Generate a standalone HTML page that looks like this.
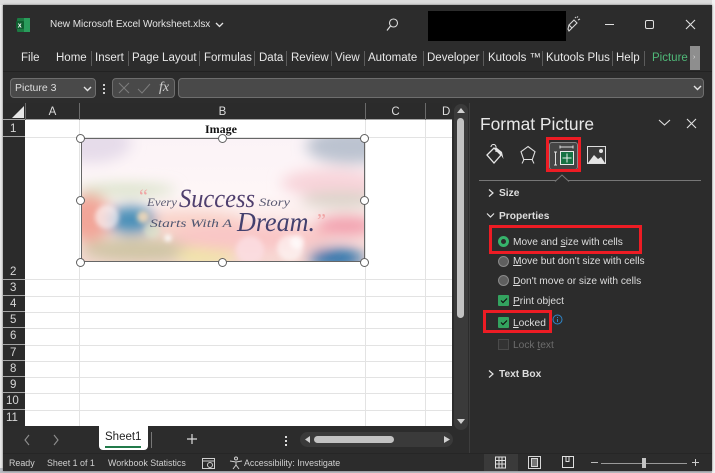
<!DOCTYPE html>
<html><head><meta charset="utf-8"><style>
html,body{margin:0;padding:0;width:715px;height:473px;overflow:hidden;background:#e9e9e9}
*{box-sizing:border-box}
body{font-family:"Liberation Sans",sans-serif;position:relative;color:#e6e6e6}
.a{position:absolute}
.t{position:absolute;white-space:nowrap;line-height:1}
.m{font-size:11.5px;top:53px;color:#e8e8e8}
.s{position:absolute;width:1px;height:15px;top:51px;background:#5c5c5c}
.rh{position:absolute;left:3px;width:22px;background:#2b2b2b;border-bottom:1px solid #a5a5a5;color:#d8d8d8;font-size:11.5px;text-align:center}
.ch{position:absolute;top:103px;height:17px;color:#dcdcdc;font-size:11.5px;text-align:center;line-height:19px;border-left:1px solid #6a6a6a}
.gh{position:absolute;left:25px;width:427px;height:1px;background:#e3e3e3}
.gv{position:absolute;top:120px;height:306px;width:1px;background:#e3e3e3}
.h{position:absolute;width:9px;height:9px;border-radius:50%;background:#fff;border:1.6px solid #5f5f5f}
.p{position:absolute;font-size:10.2px;color:#dedede;white-space:nowrap;line-height:1}
.b{font-weight:bold}
.red{position:absolute;border:3px solid #ed1c24}
.rd{position:absolute;left:498px;width:11px;height:11px;border-radius:50%;background:#5f5f5f;border:1px solid #8a8a8a}
.ck{position:absolute;left:498px;width:11px;height:11px;background:#33a35f;border-radius:1px}
.st{position:absolute;top:459px;font-size:8.9px;color:#cfcfcf;white-space:nowrap;line-height:1}
u{text-underline-offset:1px}
</style></head><body>
<div class="a" style="left:0;top:0;width:715px;height:5px;background:#dcdcdc"></div>
<div class="a" style="left:0;top:468px;width:715px;height:5px;background:#b9bcc2"></div>
<div class="a" style="left:712px;top:0;width:3px;height:473px;background:#f2f2f2"></div>
<div class="a" style="left:3px;top:5px;width:709px;height:466px;background:#2c2c2c;box-shadow:0 0 2px #666"></div>

<!-- title bar -->
<svg class="a" style="left:15px;top:17px" width="16" height="16" viewBox="0 0 16 16"><rect x="2" y="1" width="13" height="14" rx="1" fill="#1c7a42"/><rect x="9" y="1" width="6" height="14" fill="#2a9d5c"/><rect x="1" y="4" width="8" height="8" rx="1" fill="#0f5f30"/><text x="2.8" y="10.6" font-size="7" font-weight="bold" fill="#fff" font-family="Liberation Sans">x</text></svg>
<div class="t" style="left:50px;top:20px;font-size:10px;letter-spacing:-.02px;color:#e4e4e4">New Microsoft Excel Worksheet.xlsx</div>
<svg class="a" style="left:215px;top:22px" width="9" height="6"><path d="M1 1l3.500 3.500L8 1" stroke="#e4e4e4" stroke-width="1.300" fill="none"/></svg>
<svg class="a" style="left:385px;top:17px" width="15" height="15"><circle cx="8.500" cy="6" r="4" stroke="#dcdcdc" stroke-width="1.100" fill="none"/><path d="M5.500 9l-3.500 4.500" stroke="#dcdcdc" stroke-width="1.200"/></svg>
<div class="a" style="left:428px;top:11px;width:138px;height:30px;background:#000"></div>
<svg class="a" style="left:565px;top:16px" width="16" height="18"><path d="M4 9l5-5 3 3-5 5zM4 9l-1 4 1 2 3-3M10 2l1-1M13 4l2-1M12 1.500l1-1" stroke="#d8d8d8" stroke-width="1.100" fill="none"/></svg>
<div class="a" style="left:605px;top:24px;width:9px;height:1px;background:#e0e0e0"></div>
<div class="a" style="left:645px;top:20px;width:9px;height:9px;border:1.200px solid #e0e0e0;border-radius:2px"></div>
<svg class="a" style="left:685px;top:19px" width="11" height="11"><path d="M1 1l9 9M10 1l-9 9" stroke="#e0e0e0" stroke-width="1.100"/></svg>

<!-- ribbon tabs -->
<div class="a" style="left:3px;top:71px;width:709px;height:1px;background:#222"></div>
<div class="t m" style="left:21px">File</div>
<div class="t m" style="left:56px">Home</div><div class="s" style="left:91px"></div>
<div class="t m" style="left:95px">Insert</div><div class="s" style="left:128px"></div>
<div class="t m" style="left:132px">Page Layout</div><div class="s" style="left:199px"></div>
<div class="t m" style="left:204px">Formulas</div><div class="s" style="left:254px"></div>
<div class="t m" style="left:259px">Data</div><div class="s" style="left:286px"></div>
<div class="t m" style="left:291px">Review</div><div class="s" style="left:331px"></div>
<div class="t m" style="left:335px">View</div><div class="s" style="left:364px"></div>
<div class="t m" style="left:368px">Automate</div><div class="s" style="left:423px"></div>
<div class="t m" style="left:427px">Developer</div><div class="s" style="left:483px"></div>
<div class="t m" style="left:488px">Kutools ™</div><div class="s" style="left:542px"></div>
<div class="t m" style="left:546px">Kutools Plus</div><div class="s" style="left:612px"></div>
<div class="t m" style="left:616px">Help</div><div class="s" style="left:644px"></div>
<div class="t m" style="left:652px;color:#4fb878">Picture</div>
<div class="a" style="left:690px;top:46px;width:10px;height:24px;background:#8e8e8e"></div>
<div class="t" style="left:693px;top:54px;font-size:7px;color:#ddd">›</div>

<!-- formula bar -->
<div class="a" style="left:10px;top:78px;width:86px;height:20px;background:#494949;border:1px solid #6e6e6e;border-radius:4px"></div>
<div class="t" style="left:15px;top:83px;font-size:10.500px;color:#dedede">Picture 3</div>
<svg class="a" style="left:83px;top:86px" width="9" height="6"><path d="M1 1l3.500 3.500L8 1" stroke="#e4e4e4" stroke-width="1.400" fill="none"/></svg>
<div class="a" style="left:103px;top:84px;width:2px;height:2px;background:#ccc;box-shadow:0 4px #ccc,0 8px #ccc"></div>
<div class="a" style="left:112px;top:78px;width:63px;height:20px;background:#494949;border:1px solid #6e6e6e;border-radius:4px"></div>
<svg class="a" style="left:117px;top:82px" width="40" height="13"><path d="M2 1l10 10M12 1L2 11" stroke="#7c7c7c" stroke-width="1"/><path d="M21 7l4 4 8-9" stroke="#7c7c7c" stroke-width="1" fill="none"/></svg>
<div class="t" style="left:159px;top:81px;font-family:'Liberation Serif',serif;font-style:italic;font-size:14px;color:#cfcfcf">fx</div>
<div class="a" style="left:178px;top:78px;width:526px;height:20px;background:#494949;border:1px solid #6e6e6e;border-radius:4px"></div>
<svg class="a" style="left:693px;top:85px" width="9" height="6"><path d="M1 1l3.500 3.500L8 1" stroke="#e4e4e4" stroke-width="1.400" fill="none"/></svg>

<!-- col headers -->
<div class="a" style="left:3px;top:103px;width:449px;height:17px;background:#2b2b2b;border-bottom:1px solid #a5a5a5"></div>
<svg class="a" style="left:11px;top:105px" width="14" height="14"><path d="M13 1v12H1z" fill="#e6e6e6"/></svg>
<div class="ch" style="left:25px;width:54px">A</div>
<div class="ch" style="left:79px;width:286px">B</div>
<div class="ch" style="left:365px;width:60px">C</div>
<div class="ch" style="left:425px;width:27px;padding-left:16px;text-align:left">D</div>

<!-- row headers -->
<div class="rh" style="top:120px;height:17px;line-height:18px;padding-left:7px;text-align:left">1</div>
<div class="rh" style="top:137px;height:143px;line-height:270px;padding-left:7px;text-align:left;overflow:hidden">2</div>
<div class="rh" style="top:280px;height:16px;line-height:17px;padding-left:7px;text-align:left">3</div>
<div class="rh" style="top:296px;height:16px;line-height:17px;padding-left:7px;text-align:left">4</div>
<div class="rh" style="top:312px;height:16px;line-height:17px;padding-left:7px;text-align:left">5</div>
<div class="rh" style="top:328px;height:17px;line-height:17px;padding-left:7px;text-align:left">6</div>
<div class="rh" style="top:345px;height:16px;line-height:17px;padding-left:7px;text-align:left">7</div>
<div class="rh" style="top:361px;height:16px;line-height:17px;padding-left:7px;text-align:left">8</div>
<div class="rh" style="top:377px;height:16px;line-height:17px;padding-left:7px;text-align:left">9</div>
<div class="rh" style="top:393px;height:17px;line-height:17px;padding-left:3px;text-align:left">10</div>
<div class="rh" style="top:410px;height:16px;line-height:17px;padding-left:3px;text-align:left;border:0">11</div>

<!-- sheet -->
<div class="a" style="left:25px;top:120px;width:427px;height:306px;background:#fff"></div>
<div class="gh" style="top:137px"></div><div class="gh" style="top:279px"></div><div class="gh" style="top:296px"></div><div class="gh" style="top:312px"></div><div class="gh" style="top:328px"></div><div class="gh" style="top:345px"></div><div class="gh" style="top:361px"></div><div class="gh" style="top:377px"></div><div class="gh" style="top:393px"></div><div class="gh" style="top:410px"></div>
<div class="gv" style="left:79px"></div><div class="gv" style="left:365px"></div><div class="gv" style="left:425px"></div>
<div class="t" style="left:205px;top:123px;font-family:'Liberation Serif',serif;font-weight:bold;font-size:12px;color:#111">Image</div>

<!-- picture -->
<svg class="a" style="left:81px;top:138px" width="284" height="124" viewBox="0 0 284 124">
<defs>
<filter id="bl" x="-30%" y="-30%" width="160%" height="160%"><feGaussianBlur stdDeviation="7"/></filter>
<filter id="b2" x="-30%" y="-30%" width="160%" height="160%"><feGaussianBlur stdDeviation="2.500"/></filter>
<clipPath id="c"><rect width="284" height="124"/></clipPath>
<linearGradient id="g" x1="0" y1="0" x2="0" y2="1"><stop offset="0" stop-color="#fbf3f7"/><stop offset=".45" stop-color="#fef6f7"/><stop offset="1" stop-color="#f6d8d2"/></linearGradient>
</defs>
<g clip-path="url(#c)">
<rect width="284" height="124" fill="url(#g)"/>
<g filter="url(#bl)">
<ellipse cx="270" cy="8" rx="45" ry="18" fill="#bcc3d0"/>
<ellipse cx="250" cy="45" rx="50" ry="14" fill="#f8d4da"/>
<ellipse cx="10" cy="5" rx="40" ry="20" fill="#e6dcea"/>
<ellipse cx="45" cy="52" rx="50" ry="6" fill="#d5e0c4"/>
<ellipse cx="260" cy="62" rx="40" ry="8" fill="#d9d3c8"/>
<ellipse cx="110" cy="85" rx="55" ry="12" fill="#f9d2c8"/>
<ellipse cx="60" cy="112" rx="60" ry="12" fill="#cfc5a4"/>
<ellipse cx="125" cy="118" rx="30" ry="9" fill="#f0e6a4"/>
<ellipse cx="170" cy="100" rx="80" ry="14" fill="#f9c6c6"/>
<ellipse cx="8" cy="80" rx="22" ry="24" fill="#f2a598"/>
<ellipse cx="50" cy="82" rx="24" ry="14" fill="#4a8fb8"/>
<ellipse cx="265" cy="88" rx="30" ry="10" fill="#f2a0ae"/>
<ellipse cx="255" cy="120" rx="28" ry="9" fill="#1f6aa8"/>
</g>
<g filter="url(#b2)" fill="#fff">
<circle cx="26" cy="79" r="12" opacity=".6"/>
<circle cx="62" cy="79" r="6" fill="#f8dcb8" opacity=".85"/>
<circle cx="71" cy="92" r="8" fill="#dce8cc" opacity=".6"/>
<circle cx="87" cy="100" r="3.500" opacity=".95"/>
<circle cx="209" cy="110" r="13" opacity=".55"/>
<circle cx="216" cy="104" r="7" opacity=".7"/>
<circle cx="169" cy="112" r="14" fill="#fbdde2" opacity=".85"/>
</g>
<text x="58" y="65" font-family="Liberation Serif" font-size="20" fill="#f0a5a5">“</text>
<text x="66" y="68" font-family="Liberation Serif" font-style="italic" font-size="12" fill="#5a5a72" textLength="30" lengthAdjust="spacingAndGlyphs">Every</text>
<text x="98" y="69" font-family="Liberation Serif" font-style="italic" font-size="26" fill="#4f3f6e" textLength="76" lengthAdjust="spacingAndGlyphs">Success</text>
<text x="178" y="68" font-family="Liberation Serif" font-style="italic" font-size="12" fill="#5a5a72" textLength="31" lengthAdjust="spacingAndGlyphs">Story</text>
<text x="69" y="89" font-family="Liberation Serif" font-style="italic" font-size="12" fill="#4e5570" textLength="82" lengthAdjust="spacingAndGlyphs">Starts With A</text>
<text x="156" y="93" font-family="Liberation Serif" font-style="italic" font-size="27" fill="#43406e" textLength="78" lengthAdjust="spacingAndGlyphs">Dream.</text>
<text x="236" y="89" font-family="Liberation Serif" font-size="20" fill="#f0a5a5">”</text>
</g></svg>
<div class="a" style="left:81px;top:138px;width:284px;height:124px;border:1px solid #666"></div>
<div class="h" style="left:76px;top:134px"></div><div class="h" style="left:218px;top:134px"></div><div class="h" style="left:360px;top:134px"></div>
<div class="h" style="left:76px;top:196px"></div><div class="h" style="left:360px;top:196px"></div>
<div class="h" style="left:76px;top:258px"></div><div class="h" style="left:218px;top:258px"></div><div class="h" style="left:360px;top:258px"></div>

<!-- v scrollbar -->
<div class="a" style="left:454px;top:104px;width:14px;height:326px;background:#3a3a3a;border-radius:7px"></div>
<svg class="a" style="left:456px;top:107px" width="10" height="8"><path d="M5 1l4 5H1z" fill="#d0d0d0"/></svg>
<div class="a" style="left:457px;top:118px;width:7px;height:200px;background:#c2c2c2;border-radius:4px"></div>
<svg class="a" style="left:456px;top:418px" width="10" height="8"><path d="M1 1h8L5 6z" fill="#d0d0d0"/></svg>
<div class="a" style="left:469px;top:103px;width:1px;height:350px;background:#3d3d3d"></div>

<!-- tabs bar -->
<svg class="a" style="left:22px;top:434px" width="40" height="12"><path d="M7 1L3 6l4 5M32 1l4 5-4 5" stroke="#8f8f8f" stroke-width="1.100" fill="none"/></svg>
<div class="a" style="left:99px;top:426px;width:49px;height:24px;background:#fff;border-radius:0 0 4px 4px"></div>
<div class="t" style="left:105px;top:432px;font-size:11.500px;color:#222">Sheet1</div>
<div class="a" style="left:105px;top:446px;width:36px;height:2px;background:#217a4a"></div>
<div class="a" style="left:151px;top:432px;width:1px;height:16px;background:#777"></div>
<svg class="a" style="left:186px;top:433px" width="12" height="12"><path d="M6 1v10M1 6h10" stroke="#dcdcdc" stroke-width="1.200"/></svg>
<div class="a" style="left:285px;top:436px;width:2px;height:2px;background:#ddd;box-shadow:0 4px #ddd,0 8px #ddd"></div>
<div class="a" style="left:300px;top:432px;width:153px;height:15px;background:#3a3a3a;border-radius:8px"></div>
<svg class="a" style="left:304px;top:435px" width="8" height="9"><path d="M6 1v7L1 4.500z" fill="#d0d0d0"/></svg>
<div class="a" style="left:314px;top:436px;width:80px;height:7px;background:#c2c2c2;border-radius:4px"></div>
<svg class="a" style="left:443px;top:435px" width="8" height="9"><path d="M1 1v7l6-3.500z" fill="#d0d0d0"/></svg>

<!-- panel -->
<div class="t" style="left:480px;top:116px;font-size:17.400px;color:#e8e8e8">Format Picture</div>
<svg class="a" style="left:658px;top:118px" width="40" height="11"><path d="M1 2l5.500 5L12 2" stroke="#e0e0e0" stroke-width="1.100" fill="none"/><path d="M29 1l9 9M38 1l-9 9" stroke="#e0e0e0" stroke-width="1.100"/></svg>
<svg class="a" style="left:485px;top:144px" width="20" height="21"><path d="M2 11l7-7 7 7-7 8z" stroke="#e6e6e6" stroke-width="1.300" fill="none"/><path d="M6 3a2.500 2.500 0 0 1 5 0v5" stroke="#e6e6e6" stroke-width="1.100" fill="none"/><path d="M9 4h3l5 4 1.500 7-2.500-4z" fill="#e6e6e6"/></svg>
<svg class="a" style="left:519px;top:145px" width="18" height="20"><path d="M9 1.500l7 5.200-2.700 7.800H4.700L2 6.700z" stroke="#e0e0e0" stroke-width="1.100" fill="none"/><path d="M5 14.500l-2 4M13 14.500l2 4" stroke="#e0e0e0" stroke-width="1"/></svg>
<div class="a" style="left:549px;top:142px;width:29px;height:28px;background:#454545;border:1px solid #888;border-radius:3px"></div>
<svg class="a" style="left:552px;top:145px" width="24" height="22"><path d="M8 2h13M8 .5v3M21 .5v3M2 7h3M2 20h3M3.500 7v13" stroke="#e0e0e0" stroke-width="1" fill="none"/><rect x="8.500" y="6.500" width="13" height="13" fill="#177243" stroke="#e8e8e8" stroke-width="1"/><path d="M15 8.500v9M10.500 13h9" stroke="#e6f0ea" stroke-width="1"/></svg>
<div class="red" style="left:546px;top:137px;width:35px;height:35px;background:transparent"></div>
<svg class="a" style="left:587px;top:146px" width="19" height="18"><rect x=".5" y=".5" width="18" height="17" fill="#3a3a3a" stroke="#ddd"/><path d="M1 17l6-8 4 4 3-2 4 6z" fill="#e4e4e4"/><circle cx="14" cy="5" r="2" fill="#e4e4e4"/></svg>
<div class="a" style="left:479px;top:180px;width:222px;height:1px;background:#777"></div>
<svg class="a" style="left:554px;top:174px" width="16" height="8"><path d="M1 7.500L8 1l7 6.500" stroke="#777" fill="#2c2c2c"/></svg>

<svg class="a" style="left:487px;top:189px" width="8" height="8"><path d="M2 .5L6 4 2 7.500" stroke="#e4e4e4" stroke-width="1.200" fill="none"/></svg>
<div class="p b" style="left:499px;top:189px">Size</div>
<svg class="a" style="left:486px;top:212px" width="9" height="7"><path d="M1 1.500l3.500 3.500L8 1.500" stroke="#e4e4e4" stroke-width="1.200" fill="none"/></svg>
<div class="p b" style="left:499px;top:212px">Properties</div>

<div class="rd" style="top:236px;background:#2c2c2c;border:3px solid #36b36b"></div>
<div class="p" style="left:513px;top:238px">Move and <u>s</u>ize with cells</div>
<div class="red" style="left:489px;top:225px;width:153px;height:29px"></div>
<div class="rd" style="top:256px"></div>
<div class="p" style="left:513px;top:257px"><u>M</u>ove but don't size with cells</div>
<div class="rd" style="top:275px"></div>
<div class="p" style="left:513px;top:277px"><u>D</u>on't move or size with cells</div>
<div class="ck" style="top:295px"></div>
<svg class="a" style="left:500px;top:297px" width="8" height="7"><path d="M1 3.500l2 2 4-4" stroke="#111" stroke-width="1.200" fill="none"/></svg>
<div class="p" style="left:513px;top:297px"><u>P</u>rint object</div>
<div class="ck" style="top:317px"></div>
<svg class="a" style="left:500px;top:319px" width="8" height="7"><path d="M1 3.500l2 2 4-4" stroke="#111" stroke-width="1.200" fill="none"/></svg>
<div class="p" style="left:513px;top:319px"><u>L</u>ocked</div>
<div class="red" style="left:483px;top:310px;width:69px;height:23px"></div>
<svg class="a" style="left:552px;top:314px" width="11" height="11"><circle cx="5.500" cy="5.500" r="4.500" stroke="#2f86c9" fill="none"/><path d="M5.500 3v1M5.500 5v3" stroke="#2f86c9"/></svg>
<div class="a" style="left:498px;top:339px;width:11px;height:11px;background:#333;border:1px solid #4a4a4a"></div>
<div class="p" style="left:513px;top:341px;color:#6d6d6d">Lock <u>t</u>ext</div>
<svg class="a" style="left:487px;top:370px" width="8" height="8"><path d="M2 .5L6 4 2 7.500" stroke="#e4e4e4" stroke-width="1.200" fill="none"/></svg>
<div class="p b" style="left:499px;top:370px">Text Box</div>

<!-- status -->
<div class="a" style="left:3px;top:453px;width:709px;height:1px;background:#262626"></div>
<div class="st" style="left:9px">Ready</div>
<div class="st" style="left:47px">Sheet 1 of 1</div>
<div class="st" style="left:108px">Workbook Statistics</div>
<svg class="a" style="left:202px;top:457px" width="14" height="13"><rect x=".5" y="1.500" width="12" height="10" fill="none" stroke="#cfcfcf"/><path d="M1 4h11" stroke="#cfcfcf"/><circle cx="8" cy="8" r="2.500" fill="none" stroke="#cfcfcf"/></svg>
<svg class="a" style="left:229px;top:456px" width="14" height="14"><circle cx="7" cy="2.500" r="1.500" fill="none" stroke="#cfcfcf"/><path d="M1 5l6 1 6-1M7 6v3l-3 4M7 9l3 4" stroke="#cfcfcf" fill="none"/></svg>
<div class="st" style="left:244px">Accessibility: Investigate</div>
<div class="a" style="left:484px;top:454px;width:34px;height:17px;background:#3a3a3a"></div>
<svg class="a" style="left:494px;top:456px" width="14" height="13"><path d="M1.500 1h10v11h-10zM1.500 4.500h10M1.500 8h10M5 1v11M8 1v11" stroke="#e0e0e0" fill="none"/></svg>
<svg class="a" style="left:528px;top:456px" width="14" height="13"><rect x=".5" y=".5" width="12" height="12" fill="none" stroke="#d8d8d8"/><rect x="3.500" y="2.500" width="6" height="8" fill="#777" stroke="#d8d8d8"/></svg>
<svg class="a" style="left:562px;top:456px" width="14" height="13"><path d="M.5 .5h11v11H.5zM4 .5v5h3V.5" fill="none" stroke="#e0e0e0"/></svg>
<div class="a" style="left:591px;top:462px;width:7px;height:1px;background:#bbb"></div>
<div class="a" style="left:601px;top:463px;width:86px;height:1px;background:#999"></div>
<div class="a" style="left:642px;top:458px;width:4px;height:10px;background:#c4c4c4"></div>
<svg class="a" style="left:691px;top:458px" width="9" height="9"><path d="M4.500 1v7M1 4.500h7" stroke="#ccc"/></svg>
</body></html>
